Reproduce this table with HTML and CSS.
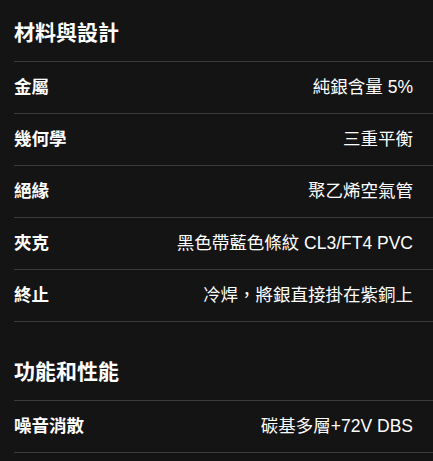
FILE: index.html
```html
<!DOCTYPE html>
<html lang="zh-Hant">
<head>
<meta charset="utf-8">
<title>規格</title>
<link rel="stylesheet" href="styles.css">
</head>
<body>
<div class="specs">
  <section class="group">
    <h2 class="group-title">材料與設計</h2>
    <div class="rows">
      <div class="row"><span class="label">金屬</span><span class="value">純銀含量 5%</span></div>
      <div class="row"><span class="label">幾何學</span><span class="value">三重平衡</span></div>
      <div class="row"><span class="label">絕緣</span><span class="value">聚乙烯空氣管</span></div>
      <div class="row"><span class="label">夾克</span><span class="value">黑色帶藍色條紋 CL3/FT4 PVC</span></div>
      <div class="row"><span class="label">終止</span><span class="value">冷焊，將銀直接掛在紫銅上</span></div>
    </div>
  </section>
  <section class="group">
    <h2 class="group-title">功能和性能</h2>
    <div class="rows">
      <div class="row"><span class="label">噪音消散</span><span class="value">碳基多層+72V DBS</span></div>
    </div>
  </section>
</div>
</body>
</html>
```

FILE: styles.css
```css
html, body {
  margin: 0;
  padding: 0;
  background: #141414;
  color: #ffffff;
  font-family: "Liberation Sans", "Noto Sans CJK TC", sans-serif;
}

.specs {
  padding: 19px 0 0 14px;
  display: flex;
  flex-direction: column;
  gap: 36px;
}

.group-title {
  margin: 0 0 14px 0;
  font-size: 21px;
  line-height: 28px;
  font-weight: 700;
}

.rows {
  border-bottom: 1px solid #3b3b3b;
}

.row {
  display: flex;
  justify-content: space-between;
  align-items: center;
  border-top: 1px solid #3b3b3b;
  padding: 12px 20px 13px 0;
  font-size: 17.5px;
  line-height: 26px;
}

.label {
  font-weight: 700;
}

.value {
  font-weight: 400;
  text-align: right;
}
```
